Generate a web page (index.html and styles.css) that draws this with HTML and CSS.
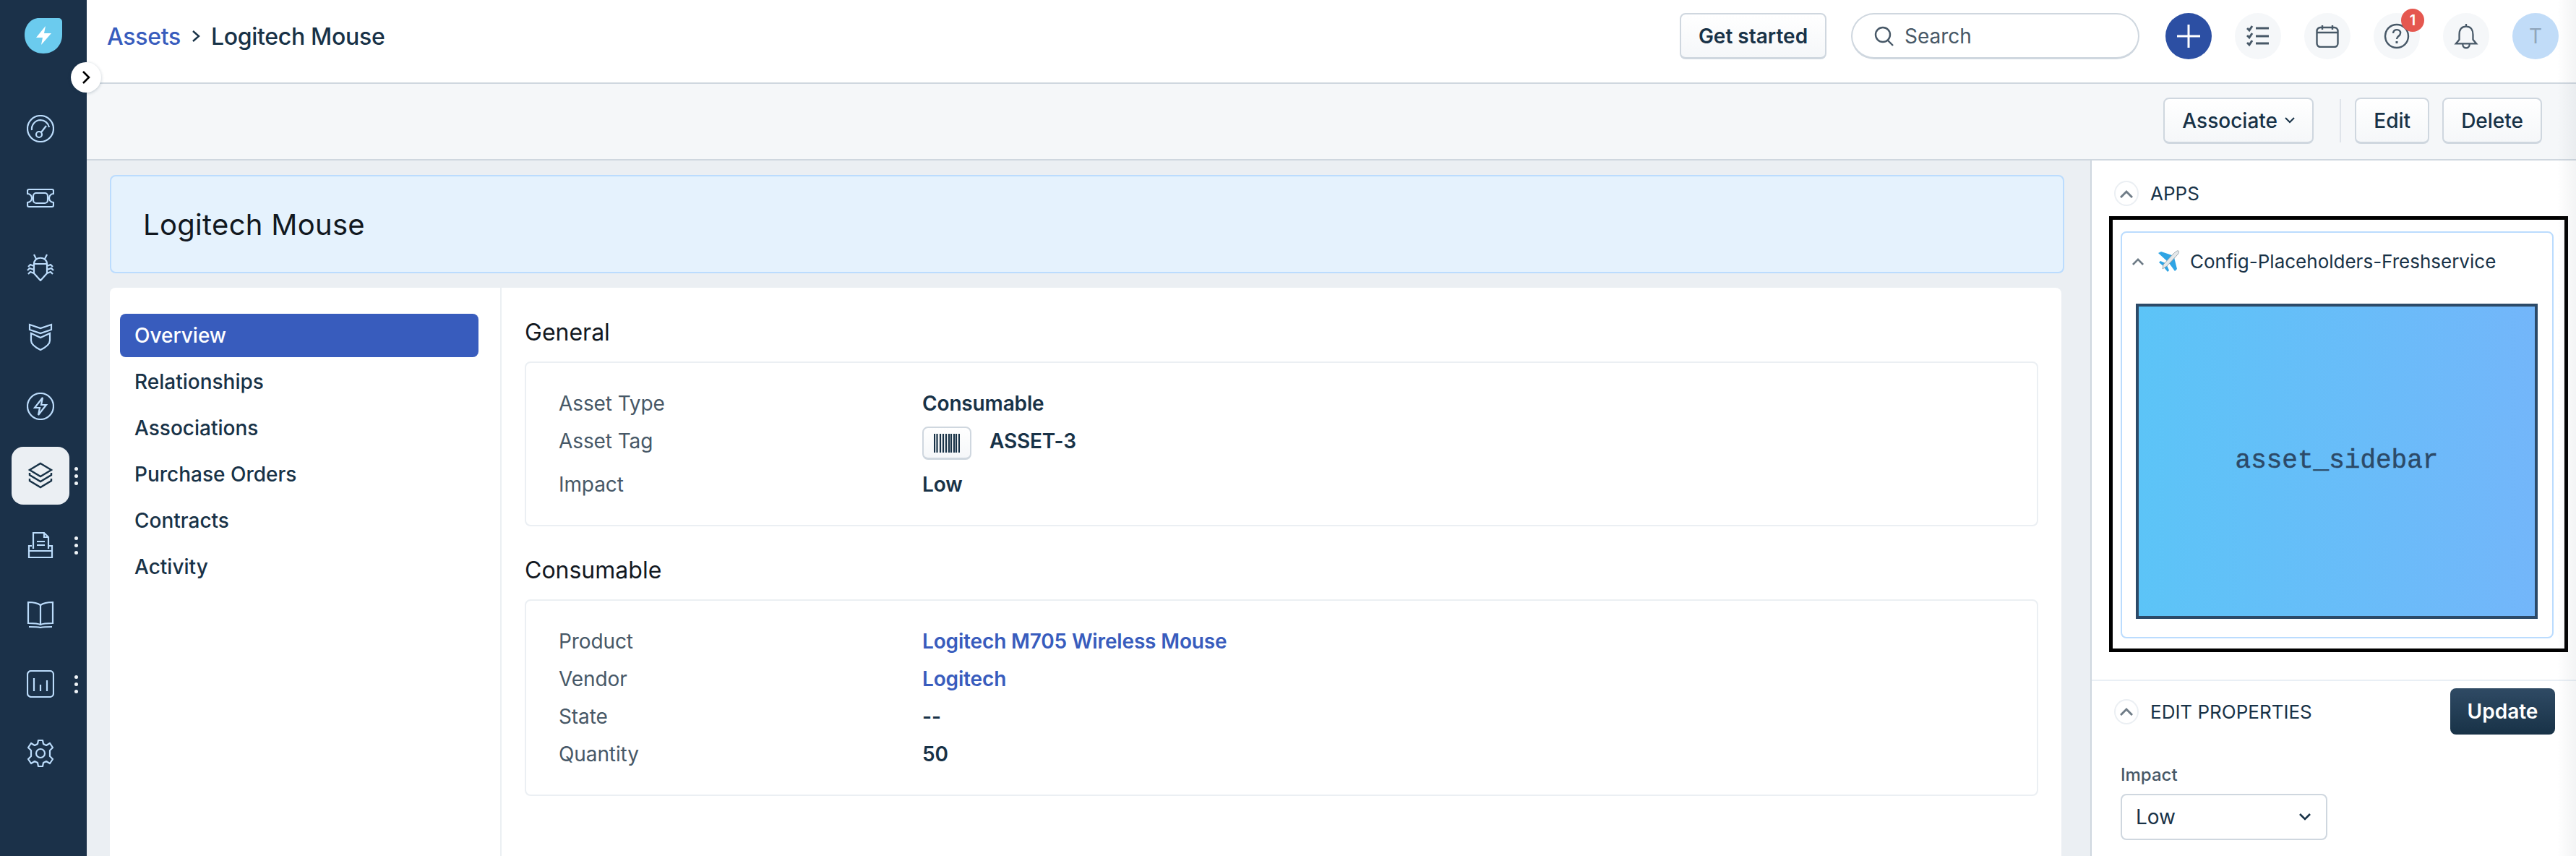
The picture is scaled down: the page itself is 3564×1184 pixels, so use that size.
FILE: index.html
```html
<!DOCTYPE html>
<html lang="en">

<head>
    <meta charset="UTF-8">
    <meta name="viewport" content="width=device-width, initial-scale=1.0">
    <link rel="stylesheet" href="styles.css">
    <title>Logitech Mouse</title>
</head>

<body>
    <div class="page">
        <nav class="sidenav">
            <div class="logo">
                <svg viewBox="0 0 52 50" width="52" height="50">
                    <path d="M20 1H47a5 5 0 0 1 5 5V24C52 39 41 50 26 50 11 50 0 39 0 24 0 11 9 1 20 1Z" fill="#6bcbee"/>
                    <path d="M29 12 16 28H25L23 38 37 22H27Z" fill="#fff"/>
                </svg>
            </div>
            <button class="toggle">
                <svg viewBox="0 0 14 20" width="14" height="20"><path d="M3 2 11 10 3 18" fill="none" stroke="#000" stroke-width="2.6"/></svg>
            </button>
            <ul class="nav-list">
                <li class="nav-item">
                    <svg class="nav-icon" viewBox="0 0 38 38"><circle cx="19" cy="19" r="18"/><path d="M7 21A12.5 12.5 0 0 1 19 7 12.5 12.5 0 0 1 31 17"/><circle cx="17" cy="27" r="4"/><path d="M20 24 27 15"/></svg>
                </li>
                <li class="nav-item">
                    <svg class="nav-icon" viewBox="0 0 38 38"><path d="M3 7H35A2 2 0 0 1 37 9V13A6 6 0 0 0 37 25V29A2 2 0 0 1 35 31H3A2 2 0 0 1 1 29V25A6 6 0 0 0 1 13V9A2 2 0 0 1 3 7Z"/><rect x="9" y="12" width="20" height="14" rx="4"/></svg>
                </li>
                <li class="nav-item">
                    <svg class="nav-icon" viewBox="0 0 38 38"><path d="M10 1 13 7M28 1 25 7M10 14C10 3 28 3 28 14V27L19 37 10 27ZM10 14H28M10 17 5 15 2 18M10 22 4 20 1 23M10 27 5 25 2 28M28 17 33 15 36 18M28 22 34 20 37 23M28 27 33 25 36 28"/></svg>
                </li>
                <li class="nav-item">
                    <svg class="nav-icon" viewBox="0 0 38 38"><path d="M4 2 19 7 34 2V9L19 14 4 9ZM6 14 19 20 32 14V24C32 30 25 34 19 37 13 34 6 30 6 24Z"/></svg>
                </li>
                <li class="nav-item">
                    <svg class="nav-icon" viewBox="0 0 38 38"><circle cx="19" cy="19" r="18"/><path d="M22 7 11 21H18L16 31 27 17H20Z"/></svg>
                </li>
                <li class="nav-item nav-item-active">
                    <svg class="nav-icon" viewBox="0 0 38 38"><path d="M19 2 34 11 19 20 4 11ZM4 15V18L19 27 34 18V15M4 23V26L19 35 34 26V23"/></svg>
                    <span class="nav-dots"><i></i><i></i><i></i></span>
                </li>
                <li class="nav-item">
                    <svg class="nav-icon" viewBox="0 0 38 38"><path d="M9 24V2H24L30 8V24M24 2V8H30M14 14H25M14 19H25M7 20H3V36H35V20H31M3 27H35"/></svg>
                    <span class="nav-dots"><i></i><i></i><i></i></span>
                </li>
                <li class="nav-item">
                    <svg class="nav-icon" viewBox="0 0 38 38"><path d="M19 6C15 3 8 2 2 2V31C8 31 15 31 19 33 23 31 30 31 36 31V2C30 2 23 3 19 6ZM19 6V33M3 36C9 36 15 36 19 37 23 36 29 36 35 36"/></svg>
                </li>
                <li class="nav-item">
                    <svg class="nav-icon" viewBox="0 0 38 38"><rect x="1" y="1" width="36" height="36" rx="5"/><path d="M10 11V29M19 20V29M28 14V29"/></svg>
                    <span class="nav-dots"><i></i><i></i><i></i></span>
                </li>
                <li class="nav-item">
                    <svg class="nav-icon" viewBox="0 0 38 38"><circle cx="19" cy="19" r="6"/><path d="M16 1H22L23 6 27 8 32 5 36 11 32 15V23L36 27 32 33 27 30 23 32 22 37H16L15 32 11 30 6 33 2 27 6 23V15L2 11 6 5 11 8 15 6Z" stroke-linejoin="round"/></svg>
                </li>
            </ul>
        </nav>

        <div class="main">
            <header class="topbar">
                <div class="crumbs">
                    <a class="crumb-link">Assets</a>
                    <svg viewBox="0 0 12 18" width="12" height="18"><path d="M2 2 10 9 2 16" fill="none" stroke="#183247" stroke-width="2.4"/></svg>
                    <span>Logitech Mouse</span>
                </div>
                <button class="btn btn-start">Get started</button>
                <div class="search">
                    <svg viewBox="0 0 28 30" width="28" height="30"><circle cx="12" cy="13" r="10" fill="none" stroke="#475867" stroke-width="2.4"/><path d="M19 21 26 28" stroke="#475867" stroke-width="2.4"/></svg>
                    <span>Search</span>
                </div>
                <div class="round round-add">
                    <svg viewBox="0 0 34 34" width="34" height="34"><path d="M17 1V33M1 17H33" stroke="#fff" stroke-width="3"/></svg>
                </div>
                <div class="round">
                    <svg class="top-icon" viewBox="0 0 32 32"><path d="M1 5 4 8 8 2M1 15 4 18 8 12M1 25 4 28 8 22M13 5H31M13 16H31M13 26H31" stroke-width="3"/></svg>
                </div>
                <div class="round">
                    <svg class="top-icon" viewBox="0 0 32 32"><rect x="1.500" y="4" width="29" height="27" rx="5"/><path d="M2 11H30M9 1V7M23 1V7"/></svg>
                </div>
                <div class="round">
                    <svg class="top-icon top-icon-big" viewBox="0 0 36 36"><circle cx="18" cy="18" r="16"/><path d="M13 14C13 7 24 8 23 14 23 18 18 18 18 22"/><path d="M18 25V28" stroke-width="3"/></svg>
                    <span class="badge">1</span>
                </div>
                <div class="round">
                    <svg class="top-icon top-icon-big" viewBox="0 0 36 38"><path d="M18 1V5M18 5C10 5 8 11 8 17V24L3 30H33L28 24V17C28 11 26 5 18 5ZM13 31C13 38 23 38 23 31"/></svg>
                </div>
                <div class="round round-avatar">T</div>
            </header>

            <div class="subbar">
                <button class="btn btn-assoc">Associate
                    <svg viewBox="0 0 14 9" width="14" height="9"><path d="M1 1 7 7 13 1" fill="none" stroke="#183247" stroke-width="2"/></svg>
                </button>
                <span class="subbar-sep"></span>
                <button class="btn">Edit</button>
                <button class="btn">Delete</button>
            </div>

            <div class="content">
                <section class="workspace">
                    <div class="banner">
                        <h1>Logitech Mouse</h1>
                    </div>
                    <div class="card">
                        <ul class="tabs">
                            <li class="tab tab-active">Overview</li>
                            <li class="tab">Relationships</li>
                            <li class="tab">Associations</li>
                            <li class="tab">Purchase Orders</li>
                            <li class="tab">Contracts</li>
                            <li class="tab">Activity</li>
                        </ul>
                        <div class="details">
                            <h2>General</h2>
                            <div class="fields">
                                <div class="field"><span class="label">Asset Type</span><span class="value">Consumable</span></div>
                                <div class="field">
                                    <span class="label">Asset Tag</span>
                                    <span class="value value-tag">
                                        <span class="barcode">
                                            <svg viewBox="0 0 36 26" width="36" height="26"><path d="M1 0V26M4.500 0V26M9 0V26M13 0V26M17 0V26M21 0V26M24 0V26M28 0V26M31 0V26M35 0V26" stroke="#183247" stroke-width="2.200"/></svg>
                                        </span>
                                        ASSET-3
                                    </span>
                                </div>
                                <div class="field"><span class="label">Impact</span><span class="value">Low</span></div>
                            </div>
                            <h2>Consumable</h2>
                            <div class="fields">
                                <div class="field"><span class="label">Product</span><a class="value value-link">Logitech M705 Wireless Mouse</a></div>
                                <div class="field"><span class="label">Vendor</span><a class="value value-link">Logitech</a></div>
                                <div class="field"><span class="label">State</span><span class="value">--</span></div>
                                <div class="field"><span class="label">Quantity</span><span class="value">50</span></div>
                            </div>
                        </div>
                    </div>
                </section>

                <aside class="panel">
                    <div class="panel-head panel-head-apps">
                        <span class="chev-round"><svg viewBox="0 0 18 12" width="18" height="12"><path d="M1 11 9 3 17 11" fill="none" stroke="#6f7c87" stroke-width="3"/></svg></span>
                        <span>APPS</span>
                    </div>
                    <div class="frame">
                        <div class="app-card">
                            <div class="app-head">
                                <svg viewBox="0 0 18 12" width="16" height="11"><path d="M1 11 9 3 17 11" fill="none" stroke="#6f7c87" stroke-width="3"/></svg>
                                <svg class="plane" viewBox="10 8 32 30" width="32" height="30">
                                    <path d="M12 12 16 10 31 15 24 23ZM27 26 34 18 38 34 35 37ZM13 25 15 23 22 26 19 30ZM20 32 24 29 27 36 25 38Z" fill="#2fa4e4"/>
                                    <path d="M40 9C41 10 41 12 38 15L24 30 18 34 19 28 33 13C36 10 39 8 40 9Z" fill="#e4e8ea" stroke="#8d989f" stroke-width=".8"/>
                                </svg>
                                <span>Config-Placeholders-Freshservice</span>
                            </div>
                            <div class="placeholder">asset_sidebar</div>
                        </div>
                    </div>
                    <div class="panel-head panel-head-edit">
                        <span class="chev-round"><svg viewBox="0 0 18 12" width="18" height="12"><path d="M1 11 9 3 17 11" fill="none" stroke="#6f7c87" stroke-width="3"/></svg></span>
                        <span>EDIT PROPERTIES</span>
                        <button class="btn-update">Update</button>
                    </div>
                    <div class="prop">
                        <div class="prop-label">Impact</div>
                        <div class="select">
                            <span>Low</span>
                            <svg viewBox="0 0 16 10" width="16" height="10"><path d="M1 1 8 8 15 1" fill="none" stroke="#183247" stroke-width="2.600"/></svg>
                        </div>
                    </div>
                </aside>
            </div>
        </div>
    </div>
</body>

</html>
```

FILE: styles.css
```css
* {
    box-sizing: border-box;
}

html, body {
    margin: 0;
    height: 100%;
}

body {
    font-family: "Inter", "Liberation Sans", sans-serif;
    font-size: 28px;
    color: #183247;
    background: #ebeff3;
    overflow: hidden;
}

ul {
    margin: 0;
    padding: 0;
    list-style: none;
}

h1, h2 {
    margin: 0;
    font-weight: 400;
    color: #12181f;
}

.page {
    position: relative;
    display: flex;
    height: 1184px;
    overflow: hidden;
}

/* faint shade down the right edge */
.page::after {
    content: "";
    position: absolute;
    top: 0;
    right: 0;
    bottom: 0;
    width: 26px;
    background: linear-gradient(to right, rgba(120, 130, 140, 0), rgba(120, 130, 140, .09));
    pointer-events: none;
}

/* left nav */
.sidenav {
    position: relative;
    flex: none;
    width: 120px;
    background: #1b3149;
}

.logo {
    display: flex;
    justify-content: center;
    padding: 24px 0 0 0;
    height: 138px;
}

.toggle {
    position: absolute;
    top: 86px;
    left: 98px;
    z-index: 2;
    display: flex;
    align-items: center;
    justify-content: center;
    width: 42px;
    height: 42px;
    padding: 0;
    border: 0;
    border-radius: 50%;
    background: #fff;
    box-shadow: 0 1px 4px rgba(18, 52, 77, .25);
}

.nav-item {
    position: relative;
    display: flex;
    align-items: center;
    justify-content: center;
    height: 80px;
    width: 80px;
    margin: 0 0 16px 16px;
    border-radius: 16px;
}

.nav-icon {
    width: 38px;
    height: 38px;
    fill: none;
    stroke: #bcdcfb;
    stroke-width: 2.200;
}

.nav-item-active {
    background: #ebeff3;
}

.nav-item-active .nav-icon {
    stroke: #183247;
    stroke-width: 2.400;
}

.nav-dots {
    position: absolute;
    left: 87px;
    top: 28px;
    display: flex;
    flex-direction: column;
    gap: 5px;
}

.nav-dots i {
    display: block;
    width: 5px;
    height: 5px;
    border-radius: 50%;
    background: #f0f4f8;
}

/* top bars */
.main {
    flex: 1;
    display: flex;
    flex-direction: column;
    min-width: 0;
}

.topbar {
    flex: none;
    display: flex;
    align-items: center;
    height: 116px;
    padding: 0 24px 14px 28px;
    background: #fff;
    border-bottom: 2px solid #cfd7df;
    gap: 32px;
}

.crumbs {
    flex: 1;
    display: flex;
    align-items: center;
    gap: 15px;
    font-size: 32px;
    font-weight: 500;
    letter-spacing: -.3px;
}

.crumb-link {
    color: #385cbd;
}

.btn {
    height: 64px;
    padding: 0 24px;
    font-family: inherit;
    font-size: 28px;
    font-weight: 500;
    color: #183247;
    background: linear-gradient(#fff, #f5f7f9);
    border: 2px solid #cfd7df;
    border-bottom-width: 3px;
    border-radius: 8px;
}

.btn-start {
    width: 203px;
    padding: 0;
    font-weight: 600;
}

.search {
    display: flex;
    align-items: center;
    gap: 14px;
    width: 399px;
    height: 64px;
    margin-left: 2px;
    padding-left: 30px;
    border: 2px solid #cfd7df;
    border-bottom-width: 3px;
    border-radius: 32px;
    color: #475867;
}

.round {
    position: relative;
    display: flex;
    align-items: center;
    justify-content: center;
    flex: none;
    width: 64px;
    height: 64px;
    border-radius: 50%;
    background: #f5f7f9;
}

.round-add {
    margin-left: 4px;
    background: #2c4fa3;
}

.round-avatar {
    background: #c1dcf8;
    color: #8fa5bb;
    font-size: 28px;
}

.top-icon {
    width: 32px;
    height: 32px;
    fill: none;
    stroke: #475867;
    stroke-width: 2.400;
}

.top-icon-big {
    width: 36px;
    height: 36px;
}

.badge {
    position: absolute;
    top: -6px;
    left: 38px;
    width: 32px;
    height: 32px;
    border-radius: 50%;
    background: #e5574f;
    color: #fff;
    font-size: 20px;
    font-weight: 600;
    line-height: 32px;
    text-align: center;
}

.subbar {
    flex: none;
    display: flex;
    align-items: center;
    justify-content: flex-end;
    height: 106px;
    padding: 0 47px 2px 0;
    background: #f5f7f9;
    border-bottom: 2px solid #cfd7df;
    gap: 18px;
}

.btn-assoc {
    display: flex;
    align-items: center;
    gap: 10px;
    width: 208px;
}

.subbar-sep {
    width: 2px;
    height: 60px;
    margin: 0 1px 0 18px;
    background: #dfe4ea;
}

/* content */
.content {
    flex: 1;
    display: flex;
    min-height: 0;
}

.workspace {
    flex: none;
    width: 2772px;
    padding: 20px 0 0 32px;
}

.banner {
    display: flex;
    align-items: center;
    width: 2704px;
    height: 136px;
    padding-left: 44px;
    background: #e5f2fd;
    border: 2px solid #bbdcfe;
    border-radius: 8px;
}

.banner h1 {
    font-size: 40px;
    letter-spacing: .3px;
}

.card {
    display: flex;
    width: 2700px;
    height: 800px;
    margin-top: 20px;
    background: #fff;
    border-radius: 8px 8px 0 0;
}

.tabs {
    flex: none;
    width: 542px;
    padding: 36px 30px 0 14px;
    border-right: 2px solid #ebeff3;
}

.tab {
    height: 60px;
    margin-bottom: 4px;
    padding-left: 20px;
    border-radius: 8px;
    font-weight: 500;
    line-height: 60px;
}

.tab-active {
    background: #385cbd;
    color: #fff;
}

.details {
    flex: 1;
    padding: 42px 32px 0;
}

.details h2 {
    font-size: 32px;
    line-height: 40px;
    margin-bottom: 20px;
}

.fields {
    padding: 38px 45px 38px;
    margin-bottom: 41px;
    border: 2px solid #ebeff3;
    border-radius: 8px;
}

.field {
    display: flex;
    align-items: flex-start;
    margin-bottom: 16px;
    line-height: 36px;
}

.field:last-child {
    margin-bottom: 0;
}

.label {
    flex: none;
    width: 503px;
    color: #475867;
    letter-spacing: -.1px;
}

.value {
    font-weight: 600;
    letter-spacing: -.15px;
}

.value-link {
    color: #385cbd;
}

.value-tag {
    display: flex;
    gap: 25px;
}

.barcode {
    display: flex;
    align-items: center;
    justify-content: center;
    width: 68px;
    height: 46px;
    margin-top: -2px;
    background: linear-gradient(#fff, #f5f7f9);
    border: 2px solid #cfd7df;
    border-bottom-width: 3px;
    border-radius: 8px;
}

/* right panel */
.panel {
    flex: 1;
    min-width: 0;
    background: #fff;
    border-left: 2px solid #cfd7df;
}

.panel-head {
    display: flex;
    align-items: center;
    gap: 16px;
    padding-left: 31px;
    font-size: 26px;
}

.panel-head-apps {
    height: 77px;
    padding-top: 14px;
}

.chev-round {
    display: flex;
    align-items: center;
    justify-content: center;
    width: 34px;
    height: 35px;
    border: 2px solid #ebeff3;
    border-radius: 50%;
}

.frame {
    width: 635px;
    height: 603px;
    margin-left: 24px;
    padding: 16px 15px 14px 11px;
    border: 5px solid #000;
}

.app-card {
    height: 100%;
    padding: 0 18px;
    border: 2px solid #bbdcfe;
    border-radius: 8px;
}

.app-head {
    display: flex;
    align-items: center;
    height: 98px;
    padding-bottom: 20px;
    font-size: 26px;
}

.app-head svg:first-child {
    flex: none;
    margin: 0 0 0 -4px;
}

.plane {
    flex: none;
    margin: 0 14px 0 18px;
}

.placeholder {
    display: flex;
    align-items: center;
    justify-content: center;
    width: 556px;
    height: 436px;
    margin-left: 1px;
    padding-bottom: 2px;
    border: 4px solid #2c4a68;
    background: linear-gradient(to right, #5cc4f7, #73b6fa);
    color: #2c4a68;
    font-family: "Liberation Mono", monospace;
    font-size: 36px;
    -webkit-text-stroke: .5px #2c4a68;
}

.panel-head-edit {
    height: 82px;
    margin-top: 38px;
    padding-top: 4px;
    padding-right: 29px;
    border-top: 2px solid #e9eff5;
}

.btn-update {
    width: 145px;
    height: 64px;
    margin-left: auto;
    font-family: inherit;
    font-size: 28px;
    font-weight: 600;
    color: #fff;
    background: linear-gradient(#2f4a64, #183247);
    border: 0;
    border-radius: 8px;
}

.prop {
    padding: 32px 0 0 40px;
}

.prop-label {
    font-size: 24px;
    font-weight: 500;
    line-height: 36px;
    margin-bottom: 8px;
    color: #475867;
}

.select {
    display: flex;
    align-items: center;
    justify-content: space-between;
    width: 286px;
    height: 64px;
    padding: 0 21px 0 19px;
    border: 2px solid #cfd7df;
    border-radius: 8px;
}
```
